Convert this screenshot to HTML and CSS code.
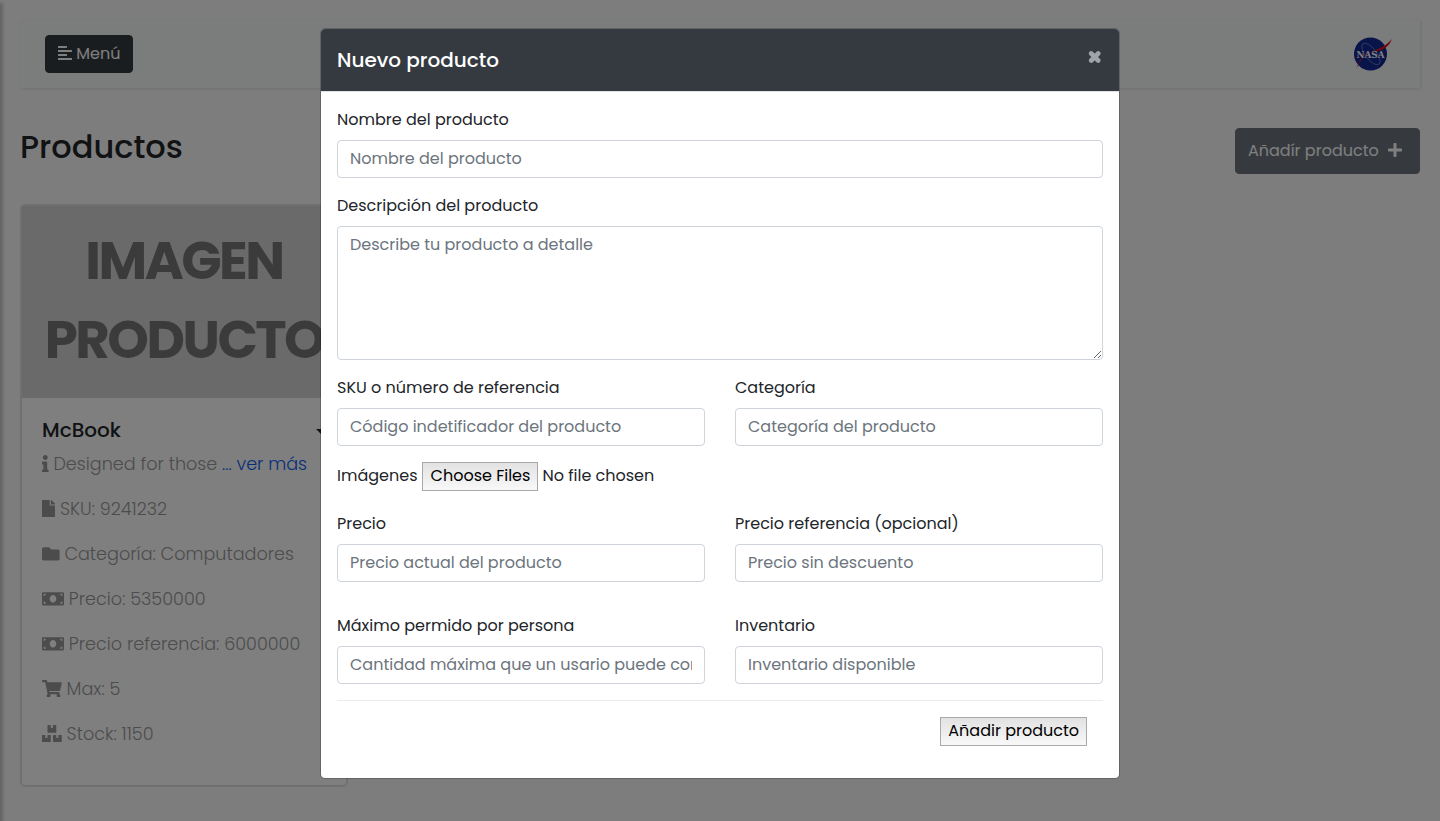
FILE: index.html
```
<!DOCTYPE html>
<html lang="es">
<head>
<meta charset="utf-8">
<title>Productos</title>
<link rel="stylesheet" href="styles.css">
</head>
<body>
<svg width="0" height="0" class="sprite">
  <symbol id="money" viewBox="0 0 640 512"><path fill-rule="evenodd" d="M608 64H32C14.330 64 0 78.330 0 96v320c0 17.670 14.330 32 32 32h576c17.670 0 32-14.330 32-32V96c0-17.670-14.330-32-32-32zM48 400v-64c35.350 0 64 28.650 64 64H48zm0-224v-64h64c0 35.350-28.650 64-64 64zm272 192c-53.020 0-96-50.150-96-112 0-61.860 42.980-112 96-112s96 50.140 96 112c0 61.870-43 112-96 112zm272 32h-64c0-35.350 28.650-64 64-64v64zm0-224c-35.350 0-64-28.650-64-64h64v64z"/></symbol>
</svg>

<main class="page">
  <nav class="navbar">
    <button class="menu-btn"><svg class="icon" viewBox="0 0 448 512"><path d="M13 32h262a13 13 0 0 1 13 13v38a13 13 0 0 1-13 13H13A13 13 0 0 1 0 83V45a13 13 0 0 1 13-13zM16 160h416a16 16 0 0 1 16 16v32a16 16 0 0 1-16 16H16a16 16 0 0 1-16-16v-32a16 16 0 0 1 16-16zM13 288h262a13 13 0 0 1 13 13v38a13 13 0 0 1-13 13H13a13 13 0 0 1-13-13v-38a13 13 0 0 1 13-13zM16 416h416a16 16 0 0 1 16 16v32a16 16 0 0 1-16 16H16a16 16 0 0 1-16-16v-32a16 16 0 0 1 16-16z"/></svg> <span>Menú</span></button>
    <svg class="logo" viewBox="0 0 42 38">
      <circle cx="19.500" cy="19" r="16.500" fill="#122a94"/>
      <ellipse cx="20" cy="19" rx="5.500" ry="13" transform="rotate(-38 20 19)" fill="none" stroke="#8f9cd0" stroke-width=".6"/>
      <path d="M1 24.500C12 19 20 17.500 29 13c5-2.500 9-5.500 12-9-2 5-6 10-12 11.500-5 1-8 .5-12.500 3C12 21 8 28 5 34.500 8 24 15 17 22 16 14 18.500 7 22 1 24.500z" fill="#e01020"/>
      <text class="logo-text" x="19.500" y="22.500" text-anchor="middle" textLength="28" lengthAdjust="spacingAndGlyphs">NASA</text>
    </svg>
  </nav>

  <header class="heading">
    <h2>Productos</h2>
    <button class="add-btn">Añadír producto <svg class="icon plus" viewBox="0 0 448 512"><path d="M416 208H272V64c0-17.670-14.330-32-32-32h-32c-17.670 0-32 14.330-32 32v144H32c-17.670 0-32 14.330-32 32v32c0 17.670 14.330 32 32 32h144v144c0 17.670 14.330 32 32 32h32c17.670 0 32-14.330 32-32V304h144c17.670 0 32-14.330 32-32v-32c0-17.670-14.330-32-32-32z"/></svg></button>
  </header>

  <article class="card">
    <div class="card-image"><span>IMAGEN</span><span>PRODUCTO</span></div>
    <div class="card-body">
      <h5><span>McBook</span><i class="caret"></i></h5>
      <p><svg class="icon" viewBox="0 0 192 512"><path d="M20 424.229h20V279.771H20c-11.046 0-20-8.954-20-20V212c0-11.046 8.954-20 20-20h112c11.046 0 20 8.954 20 20v212.229h20c11.046 0 20 8.954 20 20V492c0 11.046-8.954 20-20 20H20c-11.046 0-20-8.954-20-20v-47.771c0-11.046 8.954-20 20-20zM96 0C56.235 0 24 32.235 24 72s32.235 72 72 72 72-32.235 72-72S135.764 0 96 0z"/></svg> Designed for those <a>... ver más</a></p>
      <p><svg class="icon" viewBox="0 0 384 512"><path d="M224 136V0H24C10.700 0 0 10.700 0 24v464c0 13.300 10.700 24 24 24h336c13.300 0 24-10.700 24-24V160H248c-13.200 0-24-10.800-24-24zm160-14.100v6.100H256V0h6.100c6.400 0 12.500 2.500 17 7l97.900 98c4.500 4.500 7 10.600 7 16.900z"/></svg> SKU: 9241232</p>
      <p><svg class="icon" viewBox="0 0 512 512"><path d="M464 128H272l-64-64H48C21.490 64 0 85.490 0 112v288c0 26.510 21.490 48 48 48h416c26.510 0 48-21.490 48-48V176c0-26.510-21.490-48-48-48z"/></svg> Categoría: Computadores</p>
      <p><svg class="icon" viewBox="0 0 640 512"><use href="#money"/></svg> Precio: 5350000</p>
      <p><svg class="icon" viewBox="0 0 640 512"><use href="#money"/></svg> Precio referencia: 6000000</p>
      <p><svg class="icon" viewBox="0 0 576 512"><path d="M528.120 301.319l47.273-208C578.806 78.301 567.391 64 551.990 64H159.208l-9.166-44.810C147.758 8.021 137.930 0 126.529 0H24C10.745 0 0 10.745 0 24v16c0 13.255 10.745 24 24 24h69.883l70.248 343.435C147.325 417.100 136 435.222 136 456c0 30.928 25.072 56 56 56s56-25.072 56-56c0-15.674-6.447-29.835-16.824-40h209.647C430.447 426.165 424 440.326 424 456c0 30.928 25.072 56 56 56s56-25.072 56-56c0-22.172-12.888-41.332-31.579-50.405l5.517-24.276c3.413-15.018-8.002-29.319-23.403-29.319H218.117l-6.545-32h293.145c11.206 0 20.920-7.754 23.403-18.681z"/></svg> Max: 5</p>
      <p><svg class="icon" viewBox="0 0 576 512"><path d="M560 288h-80v96l-32-21.300-32 21.300v-96h-80c-8.800 0-16 7.200-16 16v192c0 8.800 7.200 16 16 16h224c8.800 0 16-7.200 16-16V304c0-8.800-7.200-16-16-16zm-384-64h224c8.800 0 16-7.200 16-16V16c0-8.800-7.200-16-16-16h-80v96l-32-21.300L256 96V0h-80c-8.800 0-16 7.200-16 16v192c0 8.800 7.200 16 16 16zm64 64h-80v96l-32-21.300L96 384v-96H16c-8.800 0-16 7.200-16 16v192c0 8.800 7.200 16 16 16h224c8.800 0 16-7.200 16-16V304c0-8.800-7.200-16-16-16z"/></svg> Stock: 1150</p>
    </div>
  </article>
</main>

<aside class="sidebar"></aside>
<div class="backdrop"></div>

<section class="modal">
  <header class="modal-header">
    <h5>Nuevo producto</h5>
    <button class="close"><svg viewBox="0 0 14 14"><path d="M3.200 3.500l7 7M10.200 3.500l-7 7"/></svg></button>
  </header>
  <form class="modal-body">
    <div class="field"><label>Nombre del producto</label><input class="control" placeholder="Nombre del producto"></div>
    <div class="field"><label>Descripción del producto</label><textarea class="control" rows="5" placeholder="Describe tu producto a detalle"></textarea></div>
    <div class="row">
      <div class="field"><label>SKU o número de referencia</label><input class="control" placeholder="Código indetificador del producto"></div>
      <div class="field"><label>Categoría</label><input class="control" placeholder="Categoría del producto"></div>
    </div>
    <div class="file-row"><label>Imágenes</label><button type="button" class="native-btn">Choose Files</button><span>No file chosen</span></div>
    <div class="row spaced">
      <div class="field"><label>Precio</label><input class="control" placeholder="Precio actual del producto"></div>
      <div class="field"><label>Precio referencia (opcional)</label><input class="control" placeholder="Precio sin descuento"></div>
    </div>
    <div class="row">
      <div class="field"><label>Máximo permido por persona</label><input class="control" placeholder="Cantidad máxima que un usario puede comprar"></div>
      <div class="field"><label>Inventario</label><input class="control" placeholder="Inventario disponible"></div>
    </div>
    <footer class="modal-footer"><button type="button" class="native-btn">Añadir producto</button></footer>
  </form>
</section>
</body>
</html>
```
FILE: styles.css
```
*, *::before, *::after { box-sizing: border-box; }

body {
  margin: 0;
  height: 821px;
  overflow: hidden;
  position: relative;
  background: #fafafa;
  color: #212529;
  font: 400 16px/1.5 Poppins, Inter, sans-serif;
}

h2, h5, p { margin: 0; }
button, input, textarea { font: inherit; }
.sprite { position: absolute; }

.icon {
  height: 1em;
  vertical-align: -0.125em;
  fill: currentColor;
}

/* Page */
.page { padding: 20px; }

.navbar {
  display: flex;
  align-items: center;
  justify-content: space-between;
  height: 68px;
  margin-bottom: 40px;
  padding: 0 25px;
  background: #f7fbf9;
  box-shadow: 1px 1px 3px rgba(0, 0, 0, .1);
}

.menu-btn {
  height: 38px;
  padding: 6px 12px;
  border: 1px solid #343a40;
  border-radius: 4px;
  background: #343a40;
  color: #fff;
  line-height: 24px;
  white-space: nowrap;
}

.logo { width: 42px; height: 38px; margin-right: 2px; }
.logo-text { fill: #fff; font: 700 9px "DejaVu Serif", serif; }

.heading {
  display: flex;
  align-items: flex-start;
  justify-content: space-between;
  height: 46px;
  margin-bottom: 30px;
}

.heading h2 { font-size: 32px; font-weight: 500; line-height: 38px; }

.add-btn {
  height: 46px;
  padding: 0 17px 0 12px;
  border: 1px solid #6c757d;
  border-radius: 4px;
  background: #6c757d;
  color: #fff;
  white-space: nowrap;
}
.plus { margin-left: 5px; }

.card {
  width: 328px;
  height: 583px;
  border: 2px solid #e0e0e0;
  border-radius: 5px;
  background: #fff;
}

.card-image {
  display: flex;
  flex-direction: column;
  align-items: center;
  height: 192px;
  padding-top: 15px;
  background: #d4d4d4;
  color: #777;
  font-size: 53px;
  font-weight: 700;
  line-height: 79px;
  letter-spacing: -2.500px;
}

.card-body { padding: 20px; color: #999; font-size: 17.600px; font-weight: 300; }

.card-body h5 {
  display: flex;
  align-items: center;
  justify-content: space-between;
  margin-bottom: 7px;
  color: #212529;
  font-size: 20px;
  font-weight: 500;
  line-height: 24px;
}
.caret { margin-top: 3px; margin-right: -2px; border: 6px solid transparent; border-top-color: #212529; border-bottom: 0; }

.card-body p { height: 45px; line-height: 30px; white-space: nowrap; }
.card-body a { color: #0f5cf0; }

.sidebar {
  position: absolute;
  top: 0;
  bottom: 0;
  left: -250px;
  width: 250px;
  box-shadow: 3px 3px 3px rgba(0, 0, 0, .2);
}

.backdrop { position: absolute; inset: 0; background: rgba(0, 0, 0, .5); }

/* Dialog */
.modal {
  position: absolute;
  top: 28px;
  left: 320px;
  width: 800px;
  height: 751px;
  border: 1px solid rgba(0, 0, 0, .2);
  border-radius: 5px;
  background: #fff;
  background-clip: padding-box;
}

.modal-header {
  display: flex;
  justify-content: space-between;
  height: 63px;
  padding: 16px;
  border-bottom: 1px solid #dee2e6;
  border-radius: 4px 4px 0 0;
  background: #343a40;
  background-clip: padding-box;
  color: #fff;
}
.modal-header h5 { font-size: 20px; font-weight: 500; line-height: 30px; }

.close { display: flex; width: 15px; height: 24px; padding: 5px 0 0; border: 0; background: none; }
.close svg { display: block; width: 14px; height: 14px; }
.close path { fill: none; stroke: #a0a3a7; stroke-width: 4.600; stroke-linecap: round; }

.modal-body { padding: 16px; }
.field { flex: 1; min-width: 0; margin-bottom: 16px; }
.field label { display: block; margin-bottom: 8px; }
.row { display: flex; gap: 30px; }
.row.spaced { margin-bottom: 16px; }

.control {
  display: block;
  width: 100%;
  height: 38px;
  padding: 5px 12px 7px;
  border: 1px solid #ced4da;
  border-radius: 4px;
  background: #fff;
  line-height: 24px;
}
textarea.control { height: 134px; padding: 6px 12px; }
.control::placeholder { color: #6c757d; opacity: 1; }

.file-row { display: flex; gap: 4px; height: 34px; margin-bottom: 16px; line-height: 27px; }
.file-row .native-btn { width: 116px; margin-left: 1px; }

.native-btn {
  height: 29px;
  padding: 0 7px 2px;
  border: 1px solid #a9a9a9;
  border-radius: 0;
  background: linear-gradient(#e2e2e2, #f8f8f8);
  color: #000;
  line-height: 25px;
  white-space: nowrap;
}

.modal-footer {
  display: flex;
  justify-content: flex-end;
  padding: 16px;
  border-top: 1px solid #e9ecef;
}
```
